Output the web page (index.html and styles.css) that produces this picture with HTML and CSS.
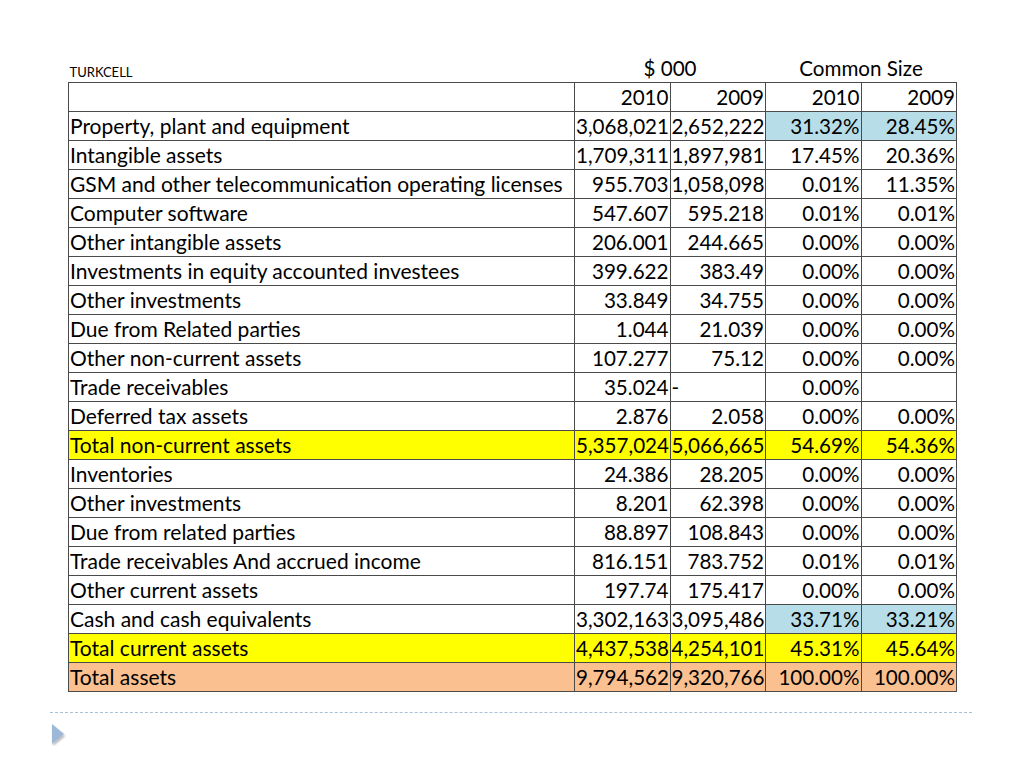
FILE: index.html
```html
<!DOCTYPE html>
<html lang="en">

<head>
    <meta charset="UTF-8">
    <title>Turkcell - Common Size Balance Sheet</title>
    <link rel="stylesheet" href="styles.css">
</head>

<body>
    <div class="slide">
        <table class="sheet">
            <colgroup>
                <col class="c-label">
                <col class="c-num">
                <col class="c-num">
                <col class="c-num">
                <col class="c-num">
            </colgroup>
            <tr class="title-row">
                <td class="company">TURKCELL</td>
                <td colspan="2" class="group">$ 000</td>
                <td colspan="2" class="group">Common Size</td>
            </tr>
            <tr>
                <td></td>
                <td>2010</td>
                <td>2009</td>
                <td>2010</td>
                <td>2009</td>
            </tr>
            <tr>
                <td>Property, plant and equipment</td>
                <td>3,068,021</td>
                <td>2,652,222</td>
                <td class="blue">31.32%</td>
                <td class="blue">28.45%</td>
            </tr>
            <tr>
                <td>Intangible assets</td>
                <td>1,709,311</td>
                <td>1,897,981</td>
                <td>17.45%</td>
                <td>20.36%</td>
            </tr>
            <tr>
                <td>GSM and other telecommunication operating licenses</td>
                <td>955.703</td>
                <td>1,058,098</td>
                <td>0.01%</td>
                <td>11.35%</td>
            </tr>
            <tr>
                <td>Computer software</td>
                <td>547.607</td>
                <td>595.218</td>
                <td>0.01%</td>
                <td>0.01%</td>
            </tr>
            <tr>
                <td>Other intangible assets</td>
                <td>206.001</td>
                <td>244.665</td>
                <td>0.00%</td>
                <td>0.00%</td>
            </tr>
            <tr>
                <td>Investments in equity accounted investees</td>
                <td>399.622</td>
                <td>383.49</td>
                <td>0.00%</td>
                <td>0.00%</td>
            </tr>
            <tr>
                <td>Other investments</td>
                <td>33.849</td>
                <td>34.755</td>
                <td>0.00%</td>
                <td>0.00%</td>
            </tr>
            <tr>
                <td>Due from Related parties</td>
                <td>1.044</td>
                <td>21.039</td>
                <td>0.00%</td>
                <td>0.00%</td>
            </tr>
            <tr>
                <td>Other non-current assets</td>
                <td>107.277</td>
                <td>75.12</td>
                <td>0.00%</td>
                <td>0.00%</td>
            </tr>
            <tr>
                <td>Trade receivables</td>
                <td>35.024</td>
                <td class="dash">-</td>
                <td>0.00%</td>
                <td></td>
            </tr>
            <tr>
                <td>Deferred tax assets</td>
                <td>2.876</td>
                <td>2.058</td>
                <td>0.00%</td>
                <td>0.00%</td>
            </tr>
            <tr class="yellow">
                <td>Total non-current assets</td>
                <td>5,357,024</td>
                <td>5,066,665</td>
                <td>54.69%</td>
                <td>54.36%</td>
            </tr>
            <tr>
                <td>Inventories</td>
                <td>24.386</td>
                <td>28.205</td>
                <td>0.00%</td>
                <td>0.00%</td>
            </tr>
            <tr>
                <td>Other investments</td>
                <td>8.201</td>
                <td>62.398</td>
                <td>0.00%</td>
                <td>0.00%</td>
            </tr>
            <tr>
                <td>Due from related parties</td>
                <td>88.897</td>
                <td>108.843</td>
                <td>0.00%</td>
                <td>0.00%</td>
            </tr>
            <tr>
                <td>Trade receivables And accrued income</td>
                <td>816.151</td>
                <td>783.752</td>
                <td>0.01%</td>
                <td>0.01%</td>
            </tr>
            <tr>
                <td>Other current assets</td>
                <td>197.74</td>
                <td>175.417</td>
                <td>0.00%</td>
                <td>0.00%</td>
            </tr>
            <tr>
                <td>Cash and cash equivalents</td>
                <td>3,302,163</td>
                <td>3,095,486</td>
                <td class="blue">33.71%</td>
                <td class="blue">33.21%</td>
            </tr>
            <tr class="yellow">
                <td>Total current assets</td>
                <td>4,437,538</td>
                <td>4,254,101</td>
                <td>45.31%</td>
                <td>45.64%</td>
            </tr>
            <tr class="orange">
                <td>Total assets</td>
                <td>9,794,562</td>
                <td>9,320,766</td>
                <td>100.00%</td>
                <td>100.00%</td>
            </tr>
        </table>

        <div class="footer">
            <div class="rule"></div>
            <svg class="bullet" width="16" height="24" viewBox="0 0 16 24">
                <defs>
                    <filter id="soft" x="-50%" y="-50%" width="200%" height="200%">
                        <feDropShadow dx="1" dy="2" stdDeviation="1.2" flood-color="#000" flood-opacity="0.3"/>
                    </filter>
                </defs>
                <polygon points="2,2 14,12 2,22" fill="#9db8d6" filter="url(#soft)"/>
            </svg>
        </div>
    </div>
</body>

</html>
```

FILE: styles.css
```css
body,
html {
    margin: 0;
    padding: 0;
    background: #fff;
}

.slide {
    width: 1024px;
    height: 768px;
    padding: 57px 0 0 68px;
    box-sizing: border-box;
    font-family: Lato, "Liberation Sans", sans-serif;
    color: #000;
}

.sheet {
    border-collapse: collapse;
    table-layout: fixed;
    width: 888px;
    font-size: 20.6px;
}

.c-label {
    width: 506px;
}

.c-num {
    width: 95.5px;
}

.sheet td {
    border: 1px solid #4a4a4a;
    height: 28px;
    padding: 0 1px 0 1px;
    text-align: right;
    white-space: nowrap;
    line-height: 28px;
}

.sheet td:first-child {
    text-align: left;
    font-size: 21px;
}

.sheet .title-row td {
    border: none;
    border-bottom: 1px solid #4a4a4a;
    height: 24px;
    line-height: 24px;
    vertical-align: bottom;
}

.sheet .title-row .company {
    font-size: 13px;
    line-height: 20px;
    height: 24px;
    padding-bottom: 0;
}

.sheet .title-row .group {
    text-align: center;
    line-height: 22px;
    height: 21px;
    padding-bottom: 3px;
}

.sheet td.dash {
    text-align: left;
}

.blue {
    background: #b7dde8;
}

.yellow td {
    background: #ffff00;
}

.orange td {
    background: #fac090;
}

.footer {
    margin: 20px 0 0 -18px;
    width: 922px;
}

.rule {
    border-top: 1px dashed #a9bfd3;
}

.bullet {
    display: block;
    margin-top: 9px;
}
```
